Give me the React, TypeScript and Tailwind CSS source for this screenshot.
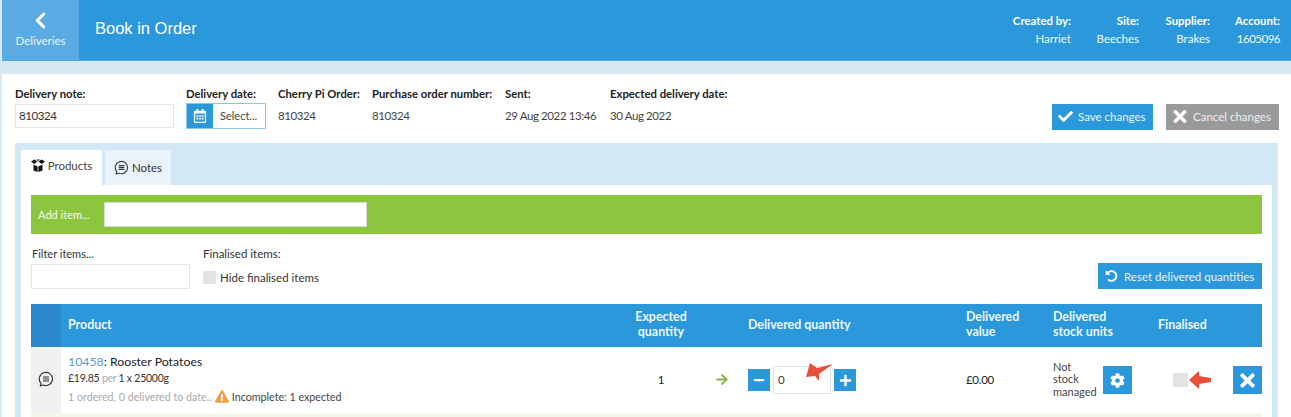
import React from "react";
import { FaChevronLeft, FaRegCalendarAlt, FaCheck, FaTimes, FaUndoAlt, FaCog, FaMinus, FaPlus, FaArrowRight, FaExclamationTriangle } from "react-icons/fa";

const Bubble = ({ className }: { className?: string }) => (
  <svg viewBox="0 0 16 16" className={className} fill="none" stroke="currentColor" strokeWidth="1.1">
    <path d="M3 12.4A6.6 6.6 0 1 1 5.2 14l-3 .9z" strokeLinejoin="round" />
    <path d="M5 6h6M5 8h6M5 10h6" />
  </svg>
);

const BoxIcon = () => (
  <svg viewBox="0 0 14 13" className="h-[13px] w-[14px] text-[#111]" fill="currentColor">
    <path d="M2.5 5.8 6.6 7.2V13L2.5 11.4zM11.5 5.8 7.4 7.2V13l4.1-1.6z" />
    <path d="M0 2.6 3.4.4 6.6 2.4 3.2 5zM14 2.6 10.6.4 7.4 2.4 10.8 5z" />
    <path d="M5.2.5h3.6L7 2z" />
  </svg>
);

const Meta = ({ k, v, w, num }: { k: string; v: string; w: string; num?: boolean }) => (
  <div className={`flex flex-col items-end gap-[3px] ${w}`}>
    <span className="text-[11.4px] font-bold">{k}</span>
    <span className={`text-[#f0f7fc] ${num ? "tracking-[-0.5px]" : "text-[11.5px]"}`}>{v}</span>
  </div>
);

const Field = ({ k, v, className }: { k: string; v: string; className: string }) => (
  <div className={`flex flex-col ${className}`}>
    <span className="h-[29px] whitespace-nowrap pt-[12px] text-[11.3px] font-bold text-[#222]">{k}</span>
    <span className="mt-[5px] tracking-[-0.4px] text-[#444]">{v}</span>
  </div>
);

const cols = "grid-cols-[30px_564px_72px_51px_218px_87px_105px_75px_29px]";

export default function App() {
  return (
    <div className="relative h-[417px] w-[1291px] overflow-hidden bg-[#d6e9f5] pl-[2px] font-['Lato',sans-serif] text-[11.5px] leading-[15px] text-[#333]">
      <header className="flex h-[61px] border-b border-[#55a9e3] bg-[#2c98dc] text-white">
        <div className="flex w-[77px] flex-col items-center bg-[#5aaae3] pt-[11px]">
          <FaChevronLeft className="h-[19px] w-[19px]" />
          <span className="mt-[3px] text-[#e8f3fb]">Deliveries</span>
        </div>
        <h1 className="ml-[16px] mt-[18px] font-['Liberation_Sans',sans-serif] text-[16.5px] leading-[20px]">Book in Order</h1>
        <div className="ml-auto mr-[11px] mt-[13px] flex">
          <Meta k="Created by:" v="Harriet" w="w-[80px]" />
          <Meta k="Site:" v="Beeches" w="w-[68px]" />
          <Meta k="Supplier:" v="Brakes" w="w-[71px]" />
          <Meta k="Account:" v="1605096" w="w-[70px]" num />
        </div>
      </header>
      <div className="h-[13px] bg-[#d6e8ef]" />
      <main className="bg-white">
        <section className="flex h-[69px] pl-[13px] pr-[12px]">
          <div className="flex w-[171px] flex-col">
            <span className="h-[30px] pt-[12px] text-[11.3px] font-bold text-[#222]">Delivery note:</span>
            <div className="h-[24px] w-[159px] border border-[#e6e6e6] pl-[3px] leading-[21px] tracking-[-0.4px] text-[#333]">810324</div>
          </div>
          <div className="flex w-[92px] flex-col">
            <span className="h-[29px] pt-[12px] text-[11.3px] font-bold text-[#222]">Delivery date:</span>
            <div className="flex h-[26px] w-[80px] border border-[#8fc4ea]">
              <span className="flex w-[26px] items-center justify-center bg-[#2c98dc] text-white"><FaRegCalendarAlt className="h-[14px] w-[14px]" /></span>
              <span className="pl-[7px] text-[11px] leading-[24px] text-[#444]">Select...</span>
            </div>
          </div>
          <Field k="Cherry Pi Order:" v="810324" className="w-[94px]" />
          <Field k="Purchase order number:" v="810324" className="w-[133px]" />
          <Field k="Sent:" v="29 Aug 2022 13:46" className="w-[105px]" />
          <Field k="Expected delivery date:" v="30 Aug 2022" className="w-[140px]" />
          <div className="ml-auto mt-[30px] flex gap-[13px]">
            <button className="flex h-[26px] w-[101px] items-center gap-[5px] bg-[#2c98dc] pb-[2px] pl-[6px] text-[#e8f3fb]"><FaCheck className="h-[15px] w-[15px] text-white" />Save changes</button>
            <button className="flex h-[26px] w-[113px] items-center gap-[5px] bg-[#9a9a9a] pb-[2px] pl-[6px] text-[#eee]"><FaTimes className="h-[19px] w-[16px] text-white" />Cancel changes</button>
          </div>
        </section>
        <section className="mx-[13px] h-[274px] bg-[#d3e8f7] px-[6px] pt-[7px]">
          <div className="flex h-[35px] gap-[3px]">
            <div className="flex w-[81px] items-center justify-center gap-[3px] bg-white pb-[4px] text-[#444]"><BoxIcon />Products</div>
            <div className="flex w-[66px] items-center justify-center gap-[3px] bg-[#e8f3fb] text-[#333]"><Bubble className="h-[15px] w-[15px]" />Notes</div>
          </div>
          <div className="h-[232px] bg-white px-[10px] pt-[10px]">
            <div className="flex h-[39px] items-center bg-[#8cc63f] pl-[7px] text-[11px] font-medium text-[#eef7e2]">
              Add item...
              <div className="ml-[14px] h-[25px] w-[263px] border border-[#d8d8d8] bg-white" />
            </div>
            <div className="flex h-[70px]">
              <div className="flex w-[172px] flex-col pt-[4px]">
                <span className="mt-[8px] pl-[1px] text-[11px]">Filter items...</span>
                <div className="mt-[3px] h-[25px] w-[159px] border border-[#e6e6e6]" />
              </div>
              <div className="flex flex-col pt-[12px]">
                <span>Finalised items:</span>
                <label className="mt-[9px] flex items-center gap-[4px]"><span className="h-[13px] w-[13px] bg-[#e3e3e3]" />Hide finalised items</label>
              </div>
              <button className="ml-auto mt-[29px] flex h-[26px] w-[164px] items-center gap-[6px] bg-[#2c98dc] pl-[7px] text-[#e8f3fb]"><FaUndoAlt className="h-[12px] w-[13px] text-white" />Reset delivered quantities</button>
            </div>
            <div className={`grid h-[43px] ${cols} items-center bg-[#2c98dc] text-[12.4px] font-bold leading-[15px] text-[#eef7fc]`}>
              <div className="h-full bg-[#2a88cb]" />
              <div className="pb-[2px] pl-[7px]">Product</div>
              <div className="pb-[3px] text-center">Expected<br />quantity</div>
              <div />
              <div className="pb-[2px]">Delivered quantity</div>
              <div className="pb-[3px]">Delivered<br />value</div>
              <div className="pb-[3px]">Delivered<br />stock units</div>
              <div className="pb-[2px]">Finalised</div>
              <div />
            </div>
            <div className={`grid h-[66px] ${cols} items-center`}>
              <div className="flex h-full items-center justify-center bg-[#f0f0f0] pb-[2px] text-[#333]"><Bubble className="h-[16px] w-[16px]" /></div>
              <div className="pb-[2px] pl-[7px]">
                <div className="text-[12.3px] leading-[16px] text-[#222]"><span className="text-[#5b9bd5]">10458</span>: Rooster Potatoes</div>
                <div className="mt-[1px] text-[10.5px] leading-[15px] tracking-[-0.25px] text-[#333]">£19.85 <span className="text-[#aaa]">per</span> 1 x 25000g</div>
                <div className="mt-[3px] flex items-center text-[10.7px] leading-[15px] text-[#aaa]">
                  1 ordered, 0 delivered to date..
                  <FaExclamationTriangle className="mx-[3px] h-[13px] w-[14px] text-[#f0a04b]" />
                  <span className="text-[#444]">Incomplete: 1 expected</span>
                </div>
              </div>
              <div className="pb-[2px] text-center text-[#222]">1</div>
              <div className="flex justify-center pb-[2px] pr-[1px]"><FaArrowRight className="h-[13px] w-[14px] text-[#85b83e]" /></div>
              <div className="flex items-center gap-[3px]">
                <span className="flex h-[22px] w-[22px] items-center justify-center bg-[#2c98dc] text-white"><FaMinus className="h-[12px] w-[12px]" /></span>
                <span className="flex h-[28px] w-[58px] items-center border border-[#e0e0e0] pb-[2px] pl-[4px]">0</span>
                <span className="flex h-[22px] w-[22px] items-center justify-center bg-[#2c98dc] text-white"><FaPlus className="h-[13px] w-[13px]" /></span>
              </div>
              <div className="pb-[1px] tracking-[-0.3px] text-[#222]">£0.00</div>
              <div className="flex items-center">
                <div className="w-[50px] pb-[1px] text-[11px] leading-[12.5px] text-[#444]">Not<br />stock<br />managed</div>
                <span className="flex h-[28px] w-[29px] items-center justify-center bg-[#2c98dc] text-white"><FaCog className="h-[15px] w-[15px]" /></span>
              </div>
              <div className="pl-[15px]"><span className="block h-[14px] w-[15px] bg-[#e3e3e3]" /></div>
              <span className="flex h-[28px] w-[29px] items-center justify-center bg-[#2c98dc] text-white"><FaTimes className="h-[21px] w-[19px]" /></span>
            </div>
            <div className="h-[4px] bg-[#f3f7ec]" />
          </div>
        </section>
      </main>
      <svg className="absolute left-[804px] top-[362px] h-[20px] w-[30px]" viewBox="804 362 30 20" fill="#e8503a">
        <polygon points="806,377 810,363 817,368 833,364 819,374 819,381 815,376" />
      </svg>
      <svg className="absolute left-[1188px] top-[370px] h-[20px] w-[24px]" viewBox="1188 370 24 20" fill="#e8503a">
        <polygon points="1189,380 1199,371 1199,376 1211,378 1211,382 1199,384 1199,389" />
      </svg>
    </div>
  );
}
